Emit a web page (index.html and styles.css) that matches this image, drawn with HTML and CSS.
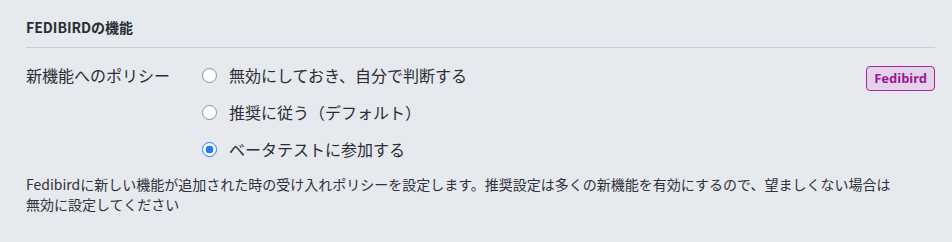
FILE: index.html
```html
<!DOCTYPE html>
<html lang="ja">
<head>
<meta charset="utf-8">
<link rel="stylesheet" href="styles.css">
</head>
<body>
<section class="section">
  <h4 class="section-title">FEDIBIRDの機能</h4>
  <div class="field">
    <div class="field-label">新機能へのポリシー</div>
    <div class="options">
      <label class="option"><input type="radio" name="policy" class="radio"><span>無効にしておき、自分で判断する</span></label>
      <label class="option"><input type="radio" name="policy" class="radio"><span>推奨に従う（デフォルト）</span></label>
      <label class="option"><input type="radio" name="policy" class="radio" checked><span>ベータテストに参加する</span></label>
    </div>
    <span class="badge">Fedibird</span>
  </div>
  <p class="hint">Fedibirdに新しい機能が追加された時の受け入れポリシーを設定します。推奨設定は多くの新機能を有効にするので、望ましくない場合は<br>無効に設定してください</p>
</section>
</body>
</html>
```
FILE: styles.css
```css
html, body {
  margin: 0;
  padding: 0;
  background: #e6e9ee;
}
body {
  font-family: "Noto Sans CJK JP", "Noto Sans", sans-serif;
  color: #2a2d35;
}
.section {
  padding: 17px 17px 0 26px;
}
.section-title {
  margin: 0;
  font-size: 14px;
  line-height: 20px;
  font-weight: 700;
  padding-bottom: 10px;
  border-bottom: 1px solid #c6d0dc;
}
.field {
  display: flex;
  align-items: flex-start;
  margin-top: 16px;
}
.field-label {
  width: 176px;
  flex: none;
  font-size: 16px;
  line-height: 22px;
}
.options {
  flex: 1;
  display: flex;
  flex-direction: column;
  gap: 15px;
}
.option {
  display: flex;
  align-items: center;
  font-size: 16px;
  line-height: 22px;
}
.radio {
  appearance: none;
  -webkit-appearance: none;
  margin: 0 12px 0 0;
  width: 15px;
  height: 15px;
  border-radius: 50%;
  border: 1px solid #8f8f8f;
  background: #ffffff;
  box-sizing: border-box;
  flex: none;
}
.radio:checked {
  border: 1.5px solid #1f7bf6;
  background: radial-gradient(circle, #1f7bf6 0 3.6px, #ffffff 4.2px);
}
.badge {
  flex: none;
  margin-top: 2px;
  box-sizing: border-box;
  height: 25px;
  padding: 0 7px;
  border: 1.5px solid #b020a8;
  border-radius: 4px;
  background: #e2d3e8;
  color: #a0169c;
  font-family: "Noto Sans", "Liberation Sans", sans-serif;
  font-weight: 700;
  font-size: 13px;
  line-height: 22px;
}
.hint {
  margin: 14px 0 0;
  font-size: 14px;
  line-height: 20px;
  color: #2f323a;
}
```
